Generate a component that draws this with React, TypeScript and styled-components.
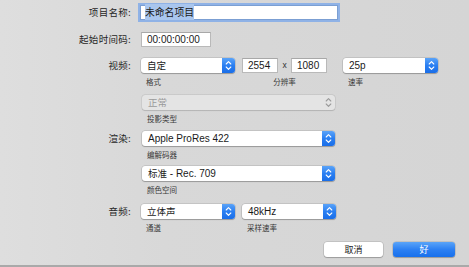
import React from "react";
import styled, { createGlobalStyle, css } from "styled-components";

const Global = createGlobalStyle`
  html, body { margin: 0; padding: 0; }
  body {
    width: 469px; height: 267px; overflow: hidden;
    font-family: "Liberation Sans", "Noto Sans CJK SC", sans-serif;
  }
`;

const Sheet = styled.div`
  box-sizing: border-box;
  width: 469px;
  height: 267px;
  background: linear-gradient(90deg, #dedede 0%, #d8d8d8 35%, #d5d5d5 100%);
  border-bottom: 2px solid #a9a9a9;
  padding-top: 5px;
  display: flex;
  flex-direction: column;
  color: #222;
`;

const Row = styled.div<{ $gap: number }>`
  display: grid;
  grid-template-columns: 131px auto;
  column-gap: 10px;
  align-items: start;
  margin-top: ${(p) => p.$gap}px;
`;

const Label = styled.div`
  text-align: right;
  font-family: "Noto Sans CJK SC", sans-serif;
  font-size: 9.5px;
  line-height: 15px;
  height: 15px;
  color: #262626;
  letter-spacing: 0.3px;
`;

const Fields = styled.div`
  display: flex;
  align-items: flex-start;
`;

const Item = styled.div<{ $ml?: number }>`
  display: flex;
  flex-direction: column;
  margin-left: ${(p) => p.$ml ?? 0}px;
`;

const Sub = styled.div<{ $center?: boolean }>`
  margin-top: 3px;
  font-family: "Noto Sans CJK SC", sans-serif;
  font-size: 7.5px;
  line-height: 11px;
  color: #3a3a3a;
  padding-left: 5px;
  ${(p) => p.$center && css`text-align: center; padding-left: 0;`}
`;

const SubCenter = styled.span`
  display: inline-block;
  width: 36px;
  text-align: center;
`;

const TextBox = styled.div<{ $w: number; $focus?: boolean }>`
  box-sizing: border-box;
  width: ${(p) => p.$w}px;
  height: 15px;
  background: #fff;
  border: 1px solid #b9b9b9;
  border-top-color: #a8a8a8;
  font-size: 10px;
  line-height: 13px;
  padding-left: 5px;
  white-space: nowrap;
  color: #1a1a1a;
  ${(p) =>
    p.$focus &&
    css`
      padding-left: 4px;
      border-color: #7b9fd3;
      box-shadow: 0 0 0 2px #8fb2e6;
    `}
`;

const Selected = styled.span`
  background: #a9c6ee;
  font-family: "Noto Sans CJK SC", sans-serif;
  font-size: 9.8px;
  padding: 1px 0;
`;

const Cjk = styled.span`
  font-family: "Noto Sans CJK SC", sans-serif;
  font-size: 9.5px;
`;

const Popup = styled.div<{ $w: number; $disabled?: boolean }>`
  box-sizing: border-box;
  width: ${(p) => p.$w}px;
  height: 15px;
  border-radius: 3px;
  background: #fff;
  box-shadow: 0 0 0 0.5px rgba(0, 0, 0, 0.18), 0 1px 1px rgba(0, 0, 0, 0.22);
  font-size: 10px;
  line-height: 15px;
  padding-left: 6px;
  white-space: nowrap;
  color: #1a1a1a;
  display: flex;
  align-items: center;
  ${(p) =>
    p.$disabled &&
    css`
      background: #e4e4e4;
      color: #9a9a9a;
      box-shadow: 0 0 0 0.5px rgba(0, 0, 0, 0.1), 0 0.5px 1px rgba(0, 0, 0, 0.12);
    `}
`;

const PopupText = styled.span`
  flex: 1;
`;

const Stepper = styled.div<{ $disabled?: boolean }>`
  width: 13px;
  height: 15px;
  border-radius: 0 3px 3px 0;
  background: ${(p) =>
    p.$disabled ? "transparent" : "linear-gradient(180deg, #5aa3f8 0%, #2a7ff2 50%, #1a6ee8 100%)"};
  display: flex;
  align-items: center;
  justify-content: center;
`;

const Times = styled.div`
  width: 13px;
  text-align: center;
  font-size: 8.5px;
  line-height: 15px;
  color: #333;
`;

const Buttons = styled.div`
  display: flex;
  justify-content: flex-end;
  gap: 10px;
  padding-right: 14px;
  margin-top: 9px;
`;

const Button = styled.div<{ $primary?: boolean; $w: number }>`
  box-sizing: border-box;
  width: ${(p) => p.$w}px;
  height: 15px;
  border-radius: 3px;
  font-family: "Noto Sans CJK SC", sans-serif;
  font-size: 9px;
  line-height: 15px;
  text-align: center;
  background: #fff;
  color: #222;
  box-shadow: 0 0 0 0.5px rgba(0, 0, 0, 0.18), 0 1px 1px rgba(0, 0, 0, 0.2);
  ${(p) =>
    p.$primary &&
    css`
      background: linear-gradient(180deg, #5aa4f8 0%, #2c80f3 50%, #1870ec 100%);
      color: #fff;
    `}
`;

const Arrows: React.FC<{ color: string }> = ({ color }) => (
  <svg width="7" height="11" viewBox="0 0 7 11">
    <path d="M1.2 4 L3.5 1.7 L5.8 4" fill="none" stroke={color} strokeWidth="1.1" strokeLinecap="round" strokeLinejoin="round" />
    <path d="M1.2 7 L3.5 9.3 L5.8 7" fill="none" stroke={color} strokeWidth="1.1" strokeLinecap="round" strokeLinejoin="round" />
  </svg>
);

const Select: React.FC<{ w: number; children: React.ReactNode; disabled?: boolean }> = ({ w, children, disabled }) => (
  <Popup $w={w} $disabled={disabled}>
    <PopupText>{children}</PopupText>
    <Stepper $disabled={disabled}>
      <Arrows color={disabled ? "#9a9a9a" : "#fff"} />
    </Stepper>
  </Popup>
);

export default function App() {
  return (
    <>
      <Global />
      <Sheet>
        <Row $gap={0}>
          <Label>项目名称:</Label>
          <Fields>
            <Item $ml={-1}>
              <TextBox $w={198} $focus>
                <Selected>未命名项目</Selected>
              </TextBox>
            </Item>
          </Fields>
        </Row>
        <Row $gap={12}>
          <Label>起始时间码:</Label>
          <Fields>
            <TextBox $w={70}>00:00:00:00</TextBox>
          </Fields>
        </Row>
        <Row $gap={11}>
          <Label>视频:</Label>
          <Fields>
            <Item>
              <Select w={94}><Cjk>自定</Cjk></Select>
              <Sub>格式</Sub>
            </Item>
            <Item $ml={7}>
              <Fields>
                <TextBox $w={36}>2554</TextBox>
                <Times>x</Times>
                <TextBox $w={36}>1080</TextBox>
              </Fields>
              <Sub $center>
                <SubCenter>分辨率</SubCenter>
              </Sub>
            </Item>
            <Item $ml={16}>
              <Select w={95}>25p</Select>
              <Sub>速率</Sub>
            </Item>
          </Fields>
        </Row>
        <Row $gap={8}>
          <Label />
          <Fields>
            <Item $ml={1}>
              <Select w={193} disabled><Cjk>正常</Cjk></Select>
              <Sub>投影类型</Sub>
            </Item>
          </Fields>
        </Row>
        <Row $gap={7}>
          <Label>渲染:</Label>
          <Fields>
            <Item $ml={1}>
              <Select w={193}>Apple ProRes 422</Select>
              <Sub>编解码器</Sub>
            </Item>
          </Fields>
        </Row>
        <Row $gap={6}>
          <Label />
          <Fields>
            <Item $ml={1}>
              <Select w={193}><Cjk>标准</Cjk> - Rec. 709</Select>
              <Sub>颜色空间</Sub>
            </Item>
          </Fields>
        </Row>
        <Row $gap={9}>
          <Label>音频:</Label>
          <Fields>
            <Item>
              <Select w={94}><Cjk>立体声</Cjk></Select>
              <Sub>通道</Sub>
            </Item>
            <Item $ml={7}>
              <Select w={94}>48kHz</Select>
              <Sub>采样速率</Sub>
            </Item>
          </Fields>
        </Row>
        <Buttons>
          <Button $w={59}>取消</Button>
          <Button $w={62} $primary>好</Button>
        </Buttons>
      </Sheet>
    </>
  );
}
